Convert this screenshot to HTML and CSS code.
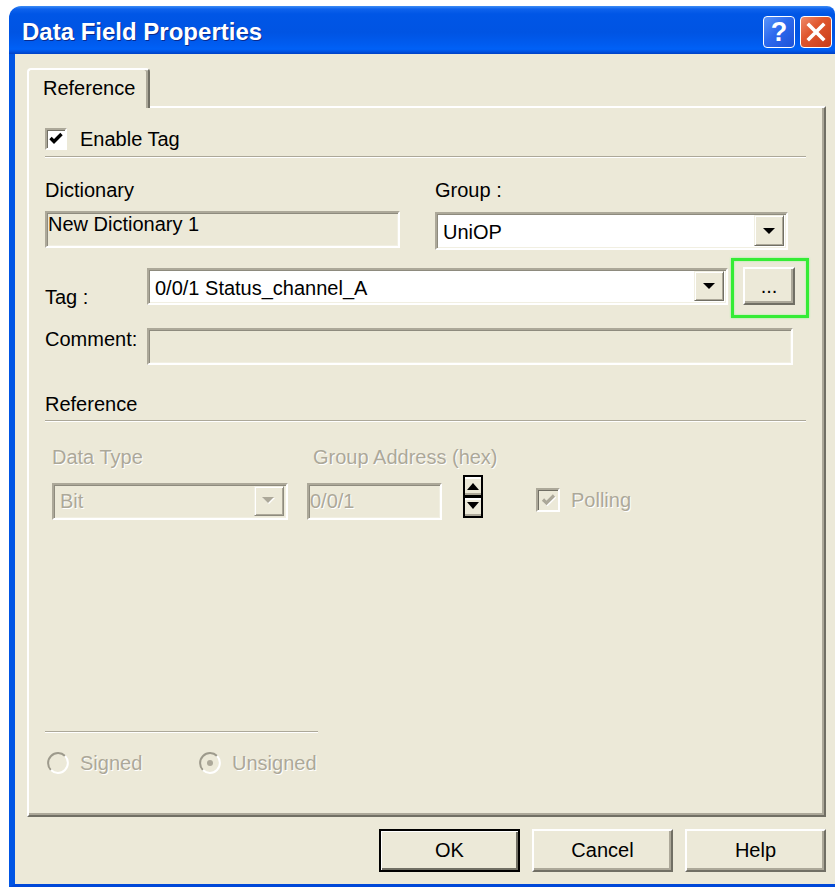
FILE: index.html
```html
<!DOCTYPE html>
<html lang="en">
<head>
<meta charset="utf-8">
<title>Data Field Properties</title>
<link rel="stylesheet" href="styles.css">
</head>
<body>
<div class="window">
  <div class="titlebar">
    <span class="title">Data Field Properties</span>
    <div class="caption-btns">
      <span class="cbtn cbtn-help">?</span>
      <span class="cbtn cbtn-close">
        <svg width="30" height="30" viewBox="0 0 30 30"><path d="M8 8 L22 22 M22 8 L8 22" stroke="#fff" stroke-width="3.6" stroke-linecap="square"/></svg>
      </span>
    </div>
  </div>

  <div class="frame">
    <div class="tabs">
      <div class="tab">Reference</div>
    </div>

    <div class="panel">
      <div class="check-row">
        <span class="checkbox">
          <svg width="18" height="18" viewBox="0 0 18 18"><polyline points="3.5,8 7,11.5 14.5,4" fill="none" stroke="#000" stroke-width="3.4"/></svg>
        </span>
        <span>Enable Tag</span>
      </div>
      <div class="sep"></div>

      <div class="pair-row">
        <div class="col col-dict">
          <div class="lbl">Dictionary</div>
          <div class="field field-ro dict-field">New Dictionary 1</div>
        </div>
        <div class="col col-group">
          <div class="lbl">Group :</div>
          <div class="combo group-combo">
            <span class="combo-value">UniOP</span>
            <span class="dd-btn"><svg width="12" height="6" viewBox="0 0 12 6"><polygon points="0,0 12,0 6,6" fill="#000"/></svg></span>
          </div>
        </div>
      </div>

      <div class="tag-row">
        <span class="row-lbl tag-lbl">Tag :</span>
        <div class="combo tag-combo">
          <span class="combo-value">0/0/1 Status_channel_A</span>
          <span class="dd-btn"><svg width="12" height="6" viewBox="0 0 12 6"><polygon points="0,0 12,0 6,6" fill="#000"/></svg></span>
        </div>
        <div class="highlight">
          <button class="btn browse-btn">...</button>
        </div>
      </div>

      <div class="comment-row">
        <span class="row-lbl">Comment:</span>
        <div class="field field-ro comment-field"></div>
      </div>

      <div class="section-title">Reference</div>
      <div class="sep"></div>

      <div class="ref-row">
        <div class="col col-type">
          <div class="lbl disabled">Data Type</div>
          <div class="combo combo-disabled type-combo">
            <span class="combo-value disabled">Bit</span>
            <span class="dd-btn"><svg width="14" height="8" viewBox="0 0 14 8"><polygon points="1,1 13,1 7,7" fill="#fff"/><polygon points="0,0 12,0 6,6" fill="#ACA899"/></svg></span>
          </div>
        </div>
        <div class="col col-addr">
          <div class="lbl disabled addr-lbl">Group Address (hex)</div>
          <div class="field field-ro addr-field disabled">0/0/1</div>
        </div>
        <span class="spinner">
          <svg width="20" height="43" viewBox="0 0 20 43">
            <rect width="20" height="43" fill="#000"/>
            <rect x="2" y="2" width="16" height="18" fill="#ECE9D8"/>
            <rect x="2" y="2" width="16" height="2" fill="#fff"/>
            <rect x="2" y="18" width="16" height="2" fill="#ACA899"/>
            <rect x="2" y="23" width="16" height="18" fill="#ECE9D8"/>
            <rect x="2" y="23" width="16" height="2" fill="#fff"/>
            <rect x="2" y="39" width="16" height="2" fill="#ACA899"/>
            <polygon points="4,15 16,15 10,8" fill="#000"/>
            <polygon points="4,27 16,27 10,34" fill="#000"/>
          </svg>
        </span>
        <div class="polling">
          <span class="checkbox checkbox-disabled">
            <svg width="20" height="20" viewBox="0 0 20 20"><polyline points="5,9.5 8.5,13 16,5.5" fill="none" stroke="#fff" stroke-width="3.2" transform="translate(1,1)"/><polyline points="5,9.5 8.5,13 16,5.5" fill="none" stroke="#ACA899" stroke-width="3.2"/></svg>
          </span>
          <span class="disabled">Polling</span>
        </div>
      </div>

      <div class="bottom-group">
        <div class="sep sep-short"></div>
        <div class="radios">
          <div class="radio-item radio-first">
            <svg width="22" height="22" viewBox="0 0 22 22">
              <circle cx="11" cy="11" r="9.5" fill="#ECE9D8"/>
              <path d="M18.07 3.93 A10 10 0 0 0 3.93 18.07" fill="none" stroke="#9D9A8C" stroke-width="2"/>
              <path d="M3.93 18.07 A10 10 0 0 0 18.07 3.93" fill="none" stroke="#fff" stroke-width="2"/>
            </svg>
            <span class="disabled">Signed</span>
          </div>
          <div class="radio-item">
            <svg width="22" height="22" viewBox="0 0 22 22">
              <circle cx="11" cy="11" r="9.5" fill="#ECE9D8"/>
              <path d="M18.07 3.93 A10 10 0 0 0 3.93 18.07" fill="none" stroke="#9D9A8C" stroke-width="2"/>
              <path d="M3.93 18.07 A10 10 0 0 0 18.07 3.93" fill="none" stroke="#fff" stroke-width="2"/>
              <circle cx="11" cy="11" r="3" fill="#ACA899"/>
            </svg>
            <span class="disabled">Unsigned</span>
          </div>
        </div>
      </div>
    </div>

    <div class="buttons">
      <button class="btn dlg-btn btn-default">OK</button>
      <button class="btn dlg-btn">Cancel</button>
      <button class="btn dlg-btn">Help</button>
    </div>
  </div>
</div>
</body>
</html>
```

FILE: styles.css
```css
html, body {
  margin: 0;
  padding: 0;
  background: #fff;
  overflow: hidden;
}

body {
  width: 835px;
  height: 887px;
  font-family: "Liberation Sans", Arial, sans-serif;
  font-size: 20px;
  line-height: 23px;
  color: #000;
}

/* ---------- window chrome ---------- */
.window {
  margin: 6px 0 0 9px;
  width: 826px;
}

.titlebar {
  box-sizing: border-box;
  height: 48px;
  display: flex;
  align-items: center;
  justify-content: space-between;
  padding: 0 3px 0 13px;
  border-radius: 12px 8px 0 0;
  background: linear-gradient(to bottom,
    #3D8DF5 0px, #0E62EC 3px, #0056E6 8px, #0054E3 55%,
    #005CF0 80%, #0061F7 90%, #0052E2 95%, #0040C4 100%);
}

.title {
  color: #fff;
  font-weight: bold;
  font-size: 24px;
  line-height: 28px;
  padding-top: 3px;
  text-shadow: 1px 1px 0 #0A2A8C;
}

.caption-btns {
  display: flex;
  gap: 5px;
  margin-top: 4px;
}

.cbtn {
  box-sizing: border-box;
  width: 32px;
  height: 32px;
  border: 1.5px solid #fff;
  border-radius: 4px;
  display: flex;
  align-items: center;
  justify-content: center;
  color: #fff;
}

.cbtn-help {
  background: linear-gradient(135deg, #5A95FA 0%, #2D6AEE 45%, #1D52D8 100%);
  font-weight: bold;
  font-size: 27px;
  line-height: 30px;
}

.cbtn-close {
  background: linear-gradient(135deg, #EE8A6A 0%, #E0572F 40%, #C93C17 100%);
}

.frame {
  border-left: 6px solid #0055E5;
  border-bottom: 3px solid #0048D8;
  background: #ECE9D8;
  padding: 14px 9px 12px 12px;
}

/* ---------- tab ---------- */
.tabs {
  display: flex;
}

.tab {
  position: relative;
  z-index: 1;
  box-sizing: border-box;
  width: 123px;
  height: 40px;
  margin-bottom: -2px;
  padding: 7px 0 0 14px;
  background: #ECE9D8;
  border-top: 2px solid #fff;
  border-left: 2px solid #fff;
  border-right: 2px solid #716F64;
  border-radius: 4px 4px 0 0;
  box-shadow: inset -2px 0 0 #ACA899;
}

/* ---------- tab page ---------- */
.panel {
  box-sizing: border-box;
  width: 799px;
  height: 711px;
  display: flex;
  flex-direction: column;
  padding: 20px 18px 41px 16px;
  border: 2px solid;
  border-color: #fff #716F64 #716F64 #fff;
  box-shadow: inset -2px -2px 0 #ACA899;
}

.sep {
  height: 0;
  border-top: 1px solid #ACA899;
  border-bottom: 1px solid #fff;
  margin-top: 4px;
}

.check-row {
  display: flex;
  align-items: center;
  height: 22px;
  gap: 13px;
}

.check-row + .sep {
  margin-top: 6px;
}

.checkbox {
  box-sizing: border-box;
  width: 22px;
  height: 22px;
  display: flex;
  align-items: center;
  justify-content: center;
  background: #fff;
  border: 2px solid;
  border-color: #ACA899 #fff #fff #ACA899;
  box-shadow: inset 1px 1px 0 #716F64;
}

.checkbox-disabled {
  width: 24px;
  height: 24px;
  background: #ECE9D8;
}

.lbl {
  white-space: nowrap;
}

.disabled {
  color: #ACA899;
  text-shadow: 1px 1px 0 #fff;
}

/* sunken edit boxes */
.field {
  box-sizing: border-box;
  height: 37px;
  border: 2px solid;
  border-color: #ACA899 #fff #fff #ACA899;
  box-shadow: inset 1px 1px 0 #8E8B7E, inset -1px -1px 0 #F1EFE2;
  white-space: nowrap;
}

.field-ro {
  background: #ECE9D8;
}

.combo {
  box-sizing: border-box;
  height: 37px;
  display: flex;
  justify-content: space-between;
  background: #fff;
  border: 2px solid;
  border-color: #ACA899 #fff #fff #ACA899;
  box-shadow: inset 1px 1px 0 #8E8B7E, inset -1px -1px 0 #F1EFE2;
}

.combo-disabled {
  background: #ECE9D8;
}

.combo-value {
  padding: 7px 0 0 6px;
  white-space: nowrap;
}

.dd-btn {
  box-sizing: border-box;
  width: 30px;
  margin: 1px 2px 2px 0;
  display: flex;
  align-items: center;
  justify-content: center;
  background: #ECE9D8;
  border: 1px solid;
  border-color: #F1EFE2 #716F64 #716F64 #F1EFE2;
  box-shadow: inset 1px 1px 0 #fff, inset -1px -1px 0 #ACA899;
}

/* dictionary / group */
.pair-row {
  display: flex;
  gap: 35px;
  margin-top: 21px;
}

.col {
  display: flex;
  flex-direction: column;
  flex: none;
}

.col-dict {
  width: 355px;
}

.dict-field {
  margin-top: 9px;
  padding-left: 1px;
}

.col-group {
  width: 353px;
}

.group-combo {
  height: 38px;
  margin-top: 10px;
}

/* tag */
.tag-row {
  display: flex;
  align-items: flex-start;
  margin-top: 8px;
}

.tag-row > * {
  flex: none;
}

.row-lbl {
  width: 102px;
  flex: none;
}

.tag-lbl {
  margin-top: 28px;
}

.tag-combo {
  width: 581px;
  margin-top: 10px;
}

.highlight {
  margin-left: 3px;
  border: 3px solid #35EC35;
  padding: 6px 11px 10px 9px;
  box-shadow: 0 0 2px #8BF58B, inset 0 0 2px #8BF58B;
}

.btn {
  box-sizing: border-box;
  font: inherit;
  color: #000;
  background: #ECE9D8;
  border: 2px solid;
  border-color: #fff #716F64 #716F64 #fff;
  box-shadow: inset -2px -2px 0 #ACA899;
  padding: 0;
  display: flex;
  align-items: center;
  justify-content: center;
}

.browse-btn {
  width: 52px;
  height: 38px;
}

/* comment */
.comment-row {
  display: flex;
  align-items: flex-start;
  margin-top: 10px;
}

.comment-field {
  width: 646px;
  flex: none;
}

.section-title {
  margin-top: 28px;
}

/* reference details */
.ref-row {
  display: flex;
  align-items: flex-start;
  margin-top: 24px;
}

.ref-row > * {
  flex: none;
}

.col-type {
  width: 236px;
  margin-left: 7px;
}

.type-combo {
  margin-top: 14px;
}

.type-combo .combo-value {
  padding-top: 5px;
}

.type-combo .dd-btn {
  border-color: #F1EFE2 #8E8B7E #8E8B7E #F1EFE2;
}

.col-addr {
  width: 135px;
  margin-left: 19px;
}

.addr-lbl {
  padding-left: 6px;
}

.addr-field {
  margin-top: 14px;
  padding: 5px 0 0 1px;
}

.spinner {
  display: block;
  margin: 29px 0 0 21px;
  height: 43px;
}

.spinner svg {
  display: block;
}

.polling {
  display: flex;
  align-items: center;
  gap: 11px;
  margin: 42px 0 0 53px;
}

/* signed / unsigned */
.bottom-group {
  margin-top: auto;
}

.sep-short {
  width: 273px;
}

.radios {
  display: flex;
  margin-top: 19px;
  height: 22px;
}

.radio-item {
  display: flex;
  align-items: center;
  gap: 11px;
}

.radio-item svg {
  display: block;
}

.radio-first {
  width: 152px;
  margin-left: 2px;
}

/* dialog buttons */
.buttons {
  display: flex;
  justify-content: flex-end;
  gap: 12px;
  margin-top: 12px;
}

.dlg-btn {
  width: 141px;
  height: 43px;
}

.btn-default {
  border: 2px solid #000;
  box-shadow: inset 1px 1px 0 #fff, inset -2px -2px 0 #716F64;
}
```
